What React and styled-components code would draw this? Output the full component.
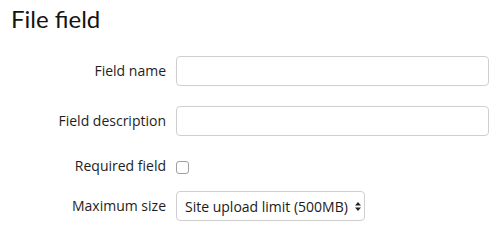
import React from "react";
import styled, { createGlobalStyle } from "styled-components";

const Global = createGlobalStyle`
  html, body { margin: 0; padding: 0; background: #fff; }
  body { font-family: "Open Sans", "Liberation Sans", sans-serif; color: #1e1e1e; }
`;

const Page = styled.div`
  padding: 4px 13px 0 11px;
  width: 502px;
  box-sizing: border-box;
`;

const Title = styled.h2`
  margin: 0;
  font-family: Lato, "Open Sans", sans-serif;
  font-weight: 400;
  font-size: 24px;
  line-height: 29px;
  color: #141414;
`;

const Form = styled.form`
  margin-top: 23px;
  display: flex;
  flex-direction: column;
`;

const Row = styled.div`
  display: flex;
  align-items: center;
  height: ${(p) => p.$h}px;
  margin-top: ${(p) => p.$mt}px;
`;

const Label = styled.label`
  width: 155px;
  margin-right: 10px;
  text-align: right;
  font-size: 14px;
  line-height: 20px;
  color: #1e1e1e;
  flex: none;
`;

const TextInput = styled.input`
  box-sizing: border-box;
  width: 313px;
  height: 30px;
  border: 1px solid #cfcfcf;
  border-radius: 4px;
  padding: 0 8px;
  font-family: inherit;
  font-size: 14px;
  outline: none;
`;

const Check = styled.input`
  appearance: none;
  -webkit-appearance: none;
  margin: 3px 0 0 0;
  width: 13px;
  height: 13px;
  box-sizing: border-box;
  border: 1px solid #a0a0a0;
  border-radius: 3px;
  background: #fff;
`;

const SelectWrap = styled.div`
  position: relative;
  width: 189px;
  height: 30px;
`;

const Select = styled.select`
  appearance: none;
  -webkit-appearance: none;
  box-sizing: border-box;
  width: 100%;
  height: 100%;
  border: 1px solid #cfcfcf;
  border-radius: 4px;
  background: #fff;
  padding: 0 10px 0 8px;
  font-family: "Open Sans", sans-serif;
  font-size: 14px;
  color: #1a1a1a;
  outline: none;
`;

const Arrows = styled.svg`
  position: absolute;
  right: 4px;
  top: 11px;
  pointer-events: none;
`;

export default function App() {
  return (
    <>
      <Global />
      <Page>
        <Title>File field</Title>
        <Form>
          <Row $h={30} $mt={0}>
            <Label>Field name</Label>
            <TextInput type="text" />
          </Row>
          <Row $h={30} $mt={20}>
            <Label>Field description</Label>
            <TextInput type="text" />
          </Row>
          <Row $h={20} $mt={20}>
            <Label>Required field</Label>
            <Check type="checkbox" />
          </Row>
          <Row $h={30} $mt={15}>
            <Label>Maximum size</Label>
            <SelectWrap>
              <Select defaultValue="site">
                <option value="site">Site upload limit (500MB)</option>
              </Select>
              <Arrows width="6" height="9" viewBox="0 0 6 9">
                <path d="M3 0 L6 3.5 L0 3.5 Z" fill="#222" />
                <path d="M0 5.5 L6 5.5 L3 9 Z" fill="#222" />
              </Arrows>
            </SelectWrap>
          </Row>
        </Form>
      </Page>
    </>
  );
}
